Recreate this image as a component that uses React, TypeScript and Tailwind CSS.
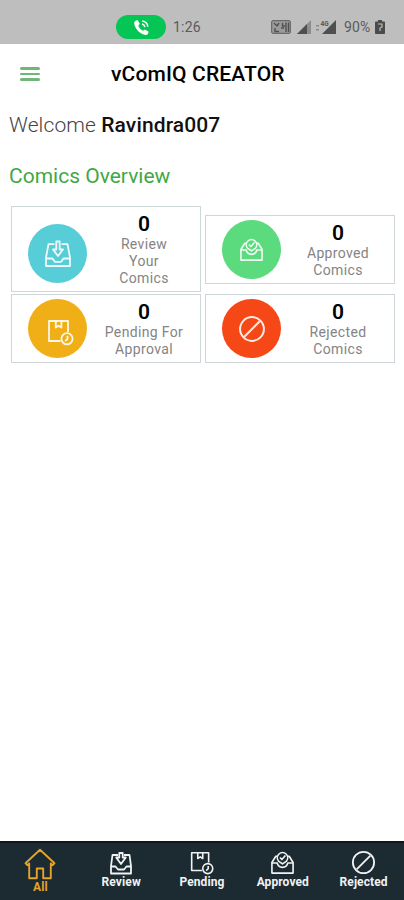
import { useState, type ReactNode } from 'react';
import clsx from 'clsx';

type IconProps = { className?: string };

const ReviewIcon = ({ className }: IconProps) => (
  <svg className={className} viewBox="0 0 28 28" fill="none" stroke="currentColor" strokeWidth="1.8" strokeLinejoin="round">
    <path d="M10.5 4.2H4.5L2 17.5V26H26V17.5L23.5 4.2H17.5" />
    <path d="M2 18.5H8.5L10.8 21.8H17.2L19.5 18.5H26" />
    <path d="M12.3 1.5H15.7V9.5H19L14 16L9 9.5H12.3Z" />
  </svg>
);

const ReviewTabIcon = ({ className }: IconProps) => (
  <svg className={className} viewBox="0 0 24 24" fill="none" stroke="currentColor" strokeWidth="1.8" strokeLinejoin="round">
    <path d="M9 4H3.5L2 15V22.5H22V15L20.5 4H15" />
    <path d="M2 15.5H6.5L9 18.5H15L17.5 15.5H22" />
    <path d="M10.3 2H13.7V6.5H16.8L12 13L7.2 6.5H10.3Z" />
  </svg>
);

const PendingIcon = ({ className }: IconProps) => (
  <svg className={className} viewBox="0 0 28 28" fill="none" stroke="currentColor" strokeWidth="1.8" strokeLinejoin="round">
    <path d="M14.5 23H3V3H22V14" />
    <path d="M9.8 3V9.5L12.6 7.7L15.4 9.5V3" />
    <circle cx="21" cy="20.8" r="5.6" />
    <path d="M21.5 17.8V21L19.2 23" />
  </svg>
);

const ApprovedIcon = ({ className }: IconProps) => (
  <svg className={className} viewBox="0 0 26 26" fill="none" stroke="currentColor" strokeWidth="1.7" strokeLinejoin="round">
    <path d="M7.5 6.5H6L2 13V24H24V13L20 6.5H18.5" />
    <path d="M2 13.5H7.5C8 16.5 10 18 13 18S18 16.5 18.5 13.5H24" />
    <path d="M8.8 11.5A5.4 5.4 0 1 1 17.2 11.5L13 14.5Z" />
    <path d="M10.3 7.8L12.4 9.9L16 5.8" />
  </svg>
);

const RejectedIcon = ({ className }: IconProps) => (
  <svg className={className} viewBox="0 0 28 28" fill="none" stroke="currentColor" strokeWidth="2">
    <circle cx="14" cy="14" r="11.9" />
    <path d="M6.3 21.7L21.7 6.3" />
  </svg>
);

const HomeIcon = ({ className }: IconProps) => (
  <svg className={className} viewBox="0 0 32 32" fill="none" stroke="currentColor" strokeWidth="1.9" strokeLinejoin="round">
    <path d="M16 1.8L1.5 15.2L3.3 17.2L5.2 15.5V30.2H12.8V20.5H19.2V30.2H26.8V15.5L28.7 17.2L30.5 15.2Z" />
  </svg>
);

const StatusBar = () => (
  <div className="flex h-11 items-center bg-[#bebebe] pt-[10px] pl-[116px] text-[#5b5b5b]">
    <div className="flex h-6 w-[50px] items-center justify-center rounded-full bg-[#05c555] text-white">
      <svg className="h-[17px] w-[17px]" viewBox="0 0 18 18" fill="none">
        <path
          d="M2.2 2.2L4.8 1L7.2 5L5.6 7.2C6.4 9.4 8.2 11.4 10.4 12.4L12.6 11L16.6 13.4L15.6 16.2C14.8 17 13 17.2 11.2 16.5C6.2 14.6 2.6 10.6 1.4 5.6C1.1 4.2 1.4 3 2.2 2.2Z"
          fill="currentColor"
        />
        <path d="M9.5 5.3C11.2 5.6 12.3 6.8 12.6 8.6M9.8 2.2C13 2.6 15.3 4.9 15.7 8.2" stroke="currentColor" strokeWidth="1.5" />
      </svg>
    </div>
    <span className="ml-[7px] w-[98px] text-[14px] tracking-[0.2px]">1:26</span>

    {/* VoLTE and signal strength */}
    <svg className="h-[14px] w-[20px]" viewBox="0 0 20 14" fill="none">
      <rect x="0.7" y="0.7" width="18.6" height="12.6" rx="1" fill="#9b9b9b" stroke="currentColor" strokeWidth="1" />
      <path d="M3 3L6 6L8 3M4 8V11.5H8M10 8H13M11.5 3V6H14M15 2.5V12M17.5 2.5V12" stroke="#505050" strokeWidth="1.4" />
    </svg>
    <svg className="ml-[6px] h-[14px] w-[14px]" viewBox="0 0 14 14">
      <path d="M0 14L14 0V14Z" fill="#8d8d8d" />
      <path d="M0 14L10 4V14Z" fill="#4f4f4f" />
    </svg>
    <svg className="ml-[5px] h-[14px] w-[20px]" viewBox="0 0 20 14">
      <path d="M6 14L20 0V14Z" fill="#4f4f4f" />
      <path d="M0 5H3V6.5H0ZM0 9H3V10.5H0Z" fill="#8b8b8b" />
      <text x="4.5" y="5.5" fontSize="6.5" fontWeight="700" fill="#565656">4G</text>
    </svg>
    <span className="ml-[8px] w-[27px] text-[14px] tracking-[0.1px] whitespace-nowrap">90%</span>
    <svg className="ml-[4px] h-[14px] w-[10px]" viewBox="0 0 10 14">
      <path d="M3 0H7V1.5H9.2Q10 1.5 10 2.3V13.2Q10 14 9.2 14H.8Q0 14 0 13.2V2.3Q0 1.5.8 1.5H3Z" fill="#4b4b4b" />
      <path d="M3 4H7V7L5 8V11" fill="none" stroke="#bebebe" strokeWidth="1.2" />
    </svg>
  </div>
);

interface StatCardProps {
  icon: ReactNode;
  color: string;
  count: number;
  lines: string[];
  tall?: boolean;
}

const StatCard = ({ icon, color, count, lines, tall }: StatCardProps) => (
  <div
    className={clsx(
      'flex w-[190px] items-center border-[1.5px] border-[#cfd6da] pl-[16px] text-[#848484]',
      tall ? 'h-[86px]' : 'h-[69px]',
    )}
  >
    <div
      className={clsx('flex h-[59px] w-[59px] shrink-0 items-center justify-center rounded-full text-white/90', color, tall && 'mt-[9px]')}
    >
      {icon}
    </div>
    <div className="ml-[8px] flex w-[98px] flex-col pt-[3px] text-center text-[14px] leading-[17px] tracking-[0.35px]">
      <span className="mb-[1px] text-[21px] leading-[21px] font-semibold tracking-normal text-black">{count}</span>
      {lines.map((line) => (
        <span key={line}>{line}</span>
      ))}
    </div>
  </div>
);

const tabs = [
  { label: 'All', icon: <HomeIcon className="h-8 w-8" /> },
  { label: 'Review', icon: <ReviewTabIcon className="h-[24px] w-[24px]" /> },
  { label: 'Pending', icon: <PendingIcon className="h-[25px] w-[25px]" /> },
  { label: 'Approved', icon: <ApprovedIcon className="h-[25px] w-[25px]" /> },
  { label: 'Rejected', icon: <RejectedIcon className="h-[25px] w-[25px]" /> },
];

export default function App() {
  const [activeTab, setActiveTab] = useState('All');

  return (
    <div className="flex h-[900px] w-[404px] flex-col overflow-hidden bg-white font-[Roboto,sans-serif]">
      <StatusBar />

      {/* Header */}
      <header className="flex h-[60px] items-center pl-[20px]">
        <button className="flex w-[20px] flex-col gap-[3px]" aria-label="Menu">
          <span className="h-[2.5px] rounded-sm bg-[#70b579]" />
          <span className="h-[2.5px] rounded-sm bg-[#70b579]" />
          <span className="h-[2.5px] rounded-sm bg-[#70b579]" />
        </button>
        <h1 className="ml-[71px] pt-[1px] text-[21px] font-medium tracking-[0.15px] text-black">vComIQ CREATOR</h1>
      </header>

      <main className="flex-1">
        <p className="mt-[6px] ml-[9px] text-[21px] leading-[30px] font-light tracking-[0.12px] text-[#444]">
          Welcome <span className="font-medium text-[#111]">Ravindra007</span>
        </p>
        <h2 className="mt-[21px] ml-[9px] text-[21px] leading-[30px] text-[#3fa845]">Comics Overview</h2>

        {/* Stats */}
        <div className="mt-[15px] ml-[11px] grid grid-cols-[190px_190px] items-center gap-x-[4px] gap-y-[2px]">
          <StatCard icon={<ReviewIcon className="h-[28px] w-[28px]" />} color="bg-[#57cdd7]" count={0} lines={['Review', 'Your', 'Comics']} tall />
          <StatCard icon={<ApprovedIcon className="h-[25px] w-[25px]" />} color="bg-[#5bda7e]" count={0} lines={['Approved', 'Comics']} />
          <StatCard icon={<PendingIcon className="mt-[6px] ml-[4px] h-[28px] w-[28px]" />} color="bg-[#f1af17]" count={0} lines={['Pending For', 'Approval']} />
          <StatCard icon={<RejectedIcon className="h-[28px] w-[28px]" />} color="bg-[#f64716]" count={0} lines={['Rejected', 'Comics']} />
        </div>
      </main>

      {/* Bottom tabs */}
      <nav className="grid h-[59px] grid-cols-5 border-t-2 border-[#10171c] bg-[#1c2a32]">
        {tabs.map(({ label, icon }) => (
          <button
            key={label}
            onClick={() => setActiveTab(label)}
            className={clsx(
              'flex flex-col items-center justify-end text-[12px] leading-[14px] font-bold tracking-[0.1px]',
              activeTab === label ? 'pb-[6px] text-[#e5a32a]' : 'pb-[11px] text-[#f0f2f3]',
            )}
          >
            {icon}
            <span>{label}</span>
          </button>
        ))}
      </nav>
    </div>
  );
}
